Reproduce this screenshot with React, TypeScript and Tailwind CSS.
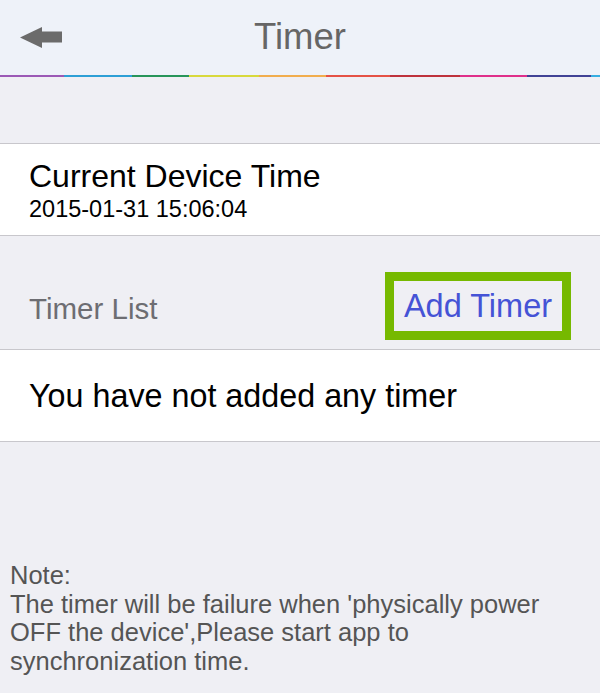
const rainbow: [string, string][] = [
  ["w-[64px]", "bg-[#9b59b6]"],
  ["w-[68px]", "bg-[#2d9fd6]"],
  ["w-[57px]", "bg-[#27955a]"],
  ["w-[70px]", "bg-[#d8d93c]"],
  ["w-[67px]", "bg-[#f1ad4e]"],
  ["w-[64px]", "bg-[#e55246]"],
  ["w-[70px]", "bg-[#be323c]"],
  ["w-[67px]", "bg-[#df308b]"],
  ["w-[64px]", "bg-[#414396]"],
  ["flex-1", "bg-[#36aee2]"],
];

const BackArrow = () => (
  <svg width="42" height="21" viewBox="0 0 42 21" className="block">
    <polygon points="0,10.5 22,0 22,4.5 42,4.5 42,15.5 22,15.5 22,21" fill="#6b6b6b" />
  </svg>
);

export default function App() {
  return (
    <div className="w-[600px] h-[693px] overflow-hidden bg-[#efeff4] font-['Liberation_Sans',Arial,sans-serif]">
      {/* nav bar */}
      <div className="h-[75px] grid grid-cols-[1fr_auto_1fr] items-center bg-[#eef2f9]">
        <div className="pl-[20px]">
          <BackArrow />
        </div>
        <h1 className="text-[36.5px] leading-[40px] text-[#666666] mt-[-1px]">Timer</h1>
        <div />
      </div>
      <div className="flex h-[2px]">
        {rainbow.map(([w, c], i) => (
          <div key={i} className={`${w} ${c}`} />
        ))}
      </div>

      <div className="h-[66px]" />

      {/* device time */}
      <div className="bg-white border-y border-[#c8c7cc] px-[29px] pt-[14px] pb-[13px]">
        <div className="text-[32px] leading-[36px] text-black">Current Device Time</div>
        <div className="text-[23.5px] leading-[26px] mt-[2px] text-black">2015-01-31 15:06:04</div>
      </div>

      {/* timer list header */}
      <div className="h-[113px] flex items-end justify-between px-[29px] pb-[9px]">
        <span className="text-[29.5px] leading-[32px] text-[#6d6d72] mb-[15px]">Timer List</span>
        <button className="w-[186px] h-[68px] border-[9px] border-[#76b900] flex items-center justify-center text-[32.5px] leading-[36px] text-[#4553d6]">
          Add Timer
        </button>
      </div>

      <div className="bg-white border-y border-[#c8c7cc] h-[93px] flex items-center px-[29px]">
        <span className="text-[32.3px] leading-[36px] text-black">You have not added any timer</span>
      </div>

      {/* note */}
      <div className="px-[10px] pt-[119px] text-[25.5px] leading-[28.5px] text-[#555555]">
        Note:
        <br />
        The timer will be failure when 'physically power
        <br />
        OFF the device',Please start app to
        <br />
        synchronization time.
      </div>
    </div>
  );
}
